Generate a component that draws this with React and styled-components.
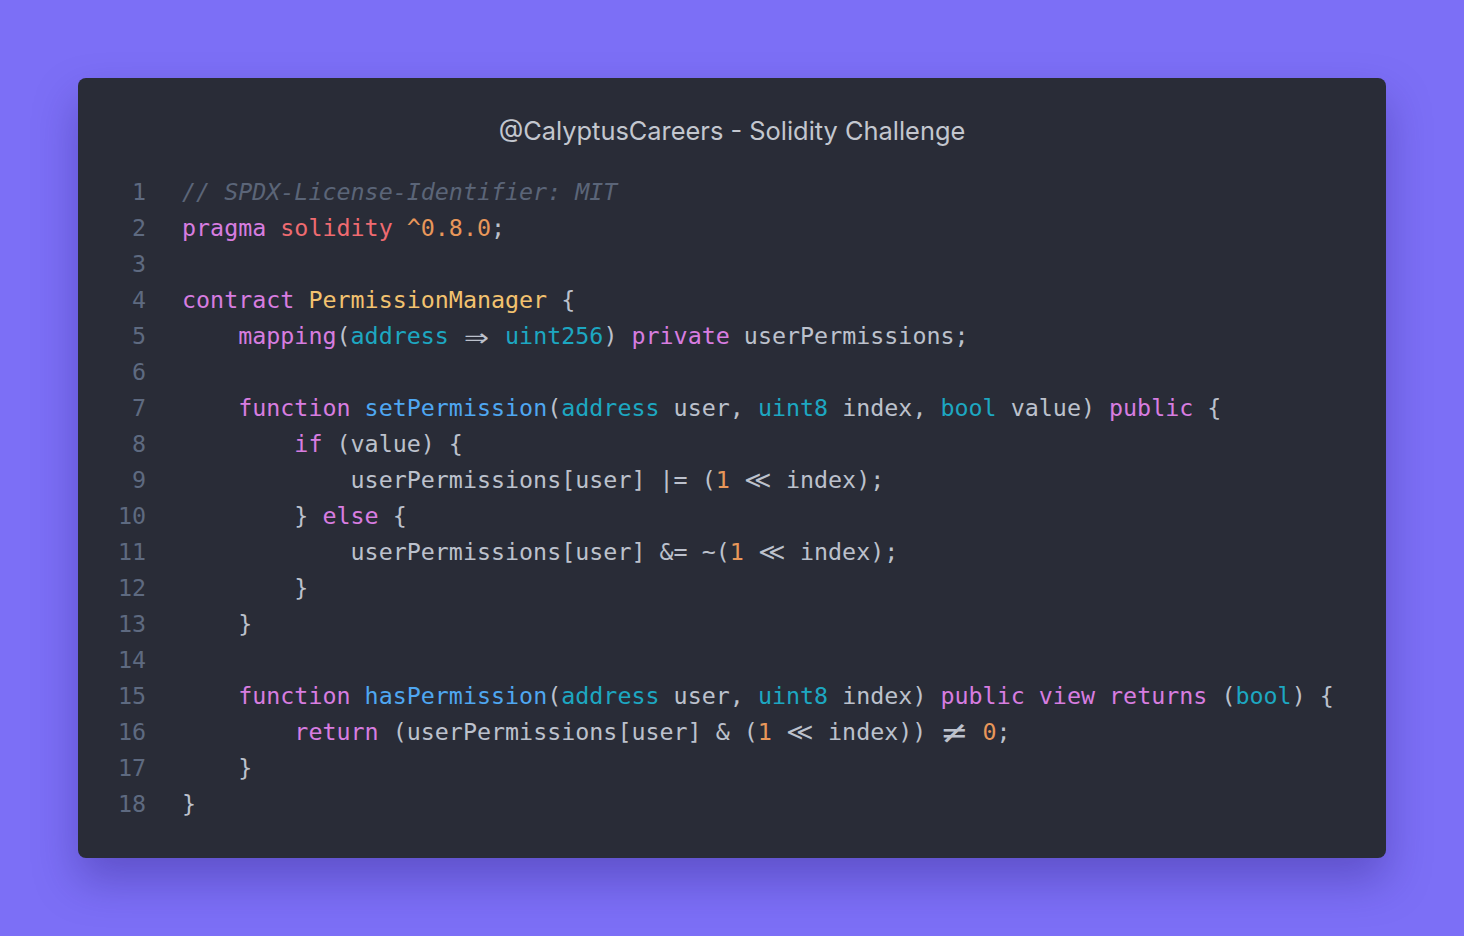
import React from "react";
import styled, { createGlobalStyle } from "styled-components";

const GlobalStyle = createGlobalStyle`
  html, body { margin: 0; padding: 0; background: #7c6ff6; }
  * { box-sizing: border-box; }
`;

const Page = styled.div`
  min-height: 936px;
  padding: 78px;
  background: #7c6ff6;
`;

const Card = styled.div`
  width: 1308px;
  height: 780px;
  background: #292c37;
  border-radius: 8px;
  box-shadow: 0 22px 44px rgba(40, 25, 120, 0.35);
  padding-top: 38px;
`;

const Title = styled.div`
  font-family: Inter, "Noto Sans", sans-serif;
  font-size: 25.4px;
  line-height: 30px;
  color: #c3c7cf;
  text-align: center;
`;

const Code = styled.div`
  margin-top: 28px;
  font-family: "DejaVu Sans Mono", "Liberation Mono", monospace;
  font-size: 23.33px;
  line-height: 36px;
  white-space: pre;
`;

const Line = styled.div`
  display: flex;
  height: 36px;
`;

const LineNo = styled.span`
  width: 68px;
  margin-right: 36px;
  text-align: right;
  color: #5e6a80;
`;

const colors = {
  kw: "#d77de0",
  red: "#ef6b71",
  type: "#1da7c1",
  fn: "#4fa7f1",
  cls: "#f2c26f",
  num: "#e8975a",
  txt: "#bcc1cc",
  com: "#5b6578",
};

const Tok = styled.span`
  color: ${(p) => colors[p.$k] || colors.txt};
  font-style: ${(p) => (p.$k === "com" ? "italic" : "normal")};
`;

const LigBox = styled.span`
  display: inline-block;
  width: 2ch;
  height: 36px;
  vertical-align: top;
  text-align: center;
  overflow: visible;
  color: ${colors.txt};
`;

const LigGlyph = styled.span`
  display: inline-block;
  font-size: ${(p) => p.$fs || "1em"};
  line-height: 36px;
  transform: scaleX(${(p) => p.$sx || 1});
`;

const T = (k, s) => ({ k, s });
const L = (s, sx, fs) => ({ k: "lig", s, sx, fs });

const lines = [
  [T("com", "// SPDX-License-Identifier: MIT")],
  [T("kw", "pragma"), T("txt", " "), T("red", "solidity"), T("txt", " "), T("num", "^0.8.0"), T("txt", ";")],
  [],
  [T("kw", "contract"), T("txt", " "), T("cls", "PermissionManager"), T("txt", " {")],
  [T("txt", "    "), T("kw", "mapping"), T("txt", "("), T("type", "address"), T("txt", " "), L("⇒", 1.3, "1.35em"), T("txt", " "), T("type", "uint256"), T("txt", ") "), T("kw", "private"), T("txt", " userPermissions;")],
  [],
  [T("txt", "    "), T("kw", "function"), T("txt", " "), T("fn", "setPermission"), T("txt", "("), T("type", "address"), T("txt", " user, "), T("type", "uint8"), T("txt", " index, "), T("type", "bool"), T("txt", " value) "), T("kw", "public"), T("txt", " {")],
  [T("txt", "        "), T("kw", "if"), T("txt", " (value) {")],
  [T("txt", "            userPermissions[user] |= ("), T("num", "1"), T("txt", " "), L("≪", 1.1, "1.05em"), T("txt", " index);")],
  [T("txt", "        } "), T("kw", "else"), T("txt", " {")],
  [T("txt", "            userPermissions[user] &= ~("), T("num", "1"), T("txt", " "), L("≪", 1.1, "1.05em"), T("txt", " index);")],
  [T("txt", "        }")],
  [T("txt", "    }")],
  [],
  [T("txt", "    "), T("kw", "function"), T("txt", " "), T("fn", "hasPermission"), T("txt", "("), T("type", "address"), T("txt", " user, "), T("type", "uint8"), T("txt", " index) "), T("kw", "public"), T("txt", " "), T("kw", "view"), T("txt", " "), T("kw", "returns"), T("txt", " ("), T("type", "bool"), T("txt", ") {")],
  [T("txt", "        "), T("kw", "return"), T("txt", " (userPermissions[user] & ("), T("num", "1"), T("txt", " "), L("≪", 1.1, "1.05em"), T("txt", " index)) "), L("≠", 1.3, "1.35em"), T("txt", " "), T("num", "0"), T("txt", ";")],
  [T("txt", "    }")],
  [T("txt", "}")],
];

export default function App() {
  return (
    <>
      <GlobalStyle />
      <Page>
        <Card>
          <Title>@CalyptusCareers - Solidity Challenge</Title>
          <Code>
            {lines.map((toks, i) => (
              <Line key={i}>
                <LineNo>{i + 1}</LineNo>
                <span>
                  {toks.map((t, j) =>
                    t.k === "lig" ? (
                      <LigBox key={j}>
                        <LigGlyph $sx={t.sx} $fs={t.fs}>{t.s}</LigGlyph>
                      </LigBox>
                    ) : (
                      <Tok key={j} $k={t.k}>{t.s}</Tok>
                    )
                  )}
                </span>
              </Line>
            ))}
          </Code>
        </Card>
      </Page>
    </>
  );
}
